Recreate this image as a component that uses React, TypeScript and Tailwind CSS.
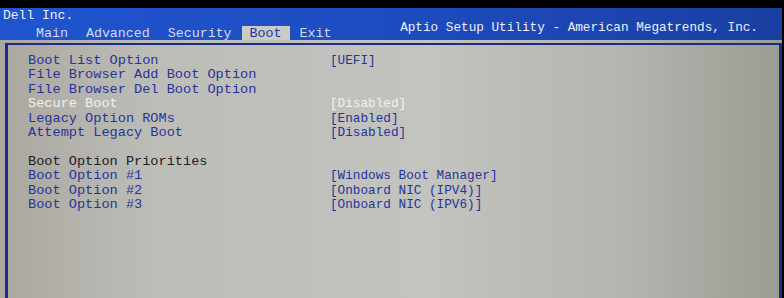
const tabs = ['Main', 'Advanced', 'Security', 'Boot', 'Exit'];

type Row = { label: string; value?: string; tone?: 'item' | 'muted' | 'heading' };

const rows: Row[] = [
  { label: 'Boot List Option', value: '[UEFI]' },
  { label: 'File Browser Add Boot Option' },
  { label: 'File Browser Del Boot Option' },
  { label: 'Secure Boot', value: '[Disabled]', tone: 'muted' },
  { label: 'Legacy Option ROMs', value: '[Enabled]' },
  { label: 'Attempt Legacy Boot', value: '[Disabled]' },
  { label: '' },
  { label: 'Boot Option Priorities', tone: 'heading' },
  { label: 'Boot Option #1', value: '[Windows Boot Manager]' },
  { label: 'Boot Option #2', value: '[Onboard NIC (IPV4)]' },
  { label: 'Boot Option #3', value: '[Onboard NIC (IPV6)]' },
];

const toneClass = {
  item: 'text-[#26349a]',
  muted: 'text-[#f2f2f0]',
  heading: 'text-[#202024]',
};

export default function App() {
  return (
    <div className="w-[784px] h-[298px] overflow-hidden bg-black font-['Liberation_Mono','DejaVu_Sans_Mono',monospace] flex flex-col">
      <div className="h-[8px] shrink-0" />

      <header className="h-[32px] shrink-0 w-[782px] flex bg-[linear-gradient(90deg,#1f55cf_0%,#1d4cc0_50%,#1a3fa2_100%)]">
        <div className="flex flex-col justify-between">
          <div className="pl-[3px] pt-[1px] text-[13px] leading-[14px] text-[#eef0f8]">Dell Inc.</div>
          <nav className="flex gap-[2px] pl-[28px]">
            {tabs.map((t) => (
              <span
                key={t}
                className={
                  t === 'Boot'
                    ? 'px-[8px] h-[14px] text-[13.3px] leading-[15px] bg-[#cbcbc6] text-[#22379e]'
                    : 'px-[8px] h-[14px] text-[13.3px] leading-[15px] text-[#d4dbef]'
                }
              >
                {t}
              </span>
            ))}
          </nav>
        </div>
        <div className="ml-auto pr-[24px] pt-[13px] text-[12.7px] leading-[14px] text-[#eef0f8]">
          Aptio Setup Utility - American Megatrends, Inc.
        </div>
      </header>

      <main className="flex-1 w-[782px] pt-[3px] pl-[5px] bg-[linear-gradient(90deg,#aaa79f_0%,#bdbdb8_20%,#c3c3bf_55%,#b3b5ae_80%,#9a9d94_100%)]">
        <div className="h-full border-l-[3px] border-t-2 border-r-[3px] border-[#1c2a88] pt-[9px] pl-[20px]">
          <div className="grid grid-cols-[302px_1fr] text-[13.6px] leading-[14.4px]">
            {rows.map((r, i) => {
              const tone = toneClass[r.tone ?? 'item'];
              return (
                <div key={i} className="contents">
                  <div className={`h-[14.4px] whitespace-pre ${tone}`}>{r.label}</div>
                  <div className={`h-[14.4px] whitespace-pre text-[12.7px] ${tone}`}>{r.value ?? ''}</div>
                </div>
              );
            })}
          </div>
        </div>
      </main>
    </div>
  );
}
